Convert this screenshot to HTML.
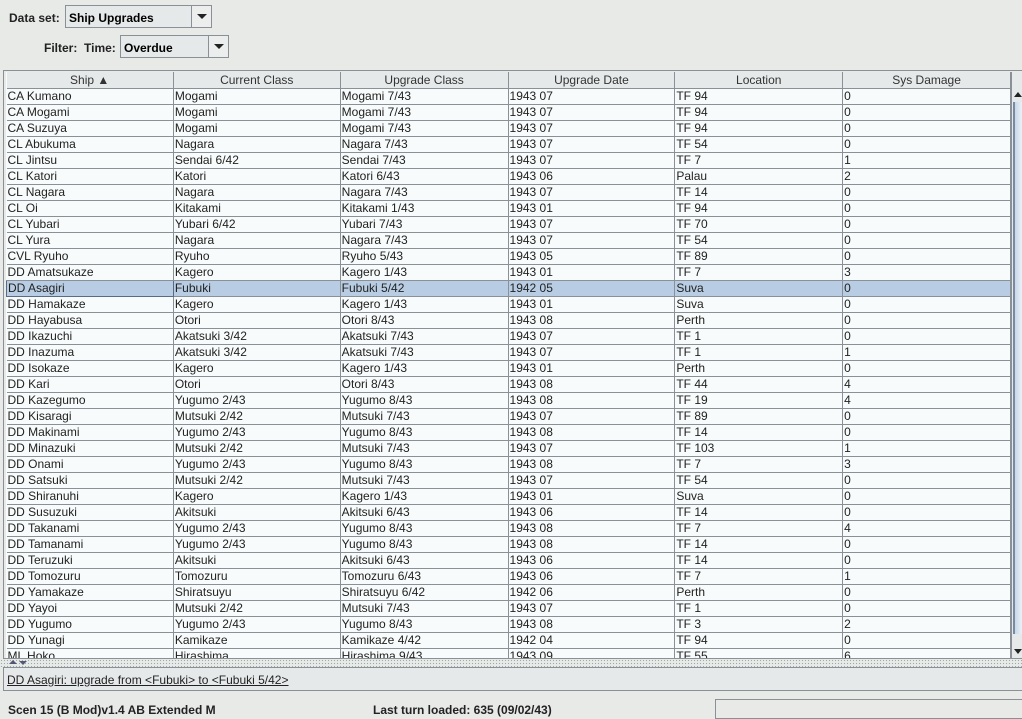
<!DOCTYPE html>
<html><head><meta charset="utf-8"><style>
*{margin:0;padding:0;box-sizing:border-box}
body{width:1022px;height:719px;background:#e8eae8;font-family:"Liberation Sans",sans-serif;position:relative;overflow:hidden;color:#000}
.lbl{position:absolute;font-size:12px;font-weight:bold;color:#222}
.combo{position:absolute;border:1px solid #8a9095;background:#e6e9ea;font-size:12px;font-weight:bold;padding:4px 3px 0;height:23px;line-height:17px}
.combo .btn{position:absolute;right:0;top:0;width:20px;height:21px;border-left:1px solid #8a9095;background:#eceeee}
.combo .btn:after{content:"";position:absolute;left:5px;top:8px;border-left:5px solid transparent;border-right:5px solid transparent;border-top:5px solid #222}
#frame{position:absolute;left:3px;top:70px;width:1019px;height:589px;border:1px solid #8a9095;border-right:none}
#tbl{position:absolute;left:6px;top:72px;width:1005px;height:586px;overflow:hidden;background:#f8fbfb}
table{border-collapse:collapse;table-layout:fixed;font-size:12px}
td,th{border:1px solid #8a9095;height:16px;padding:0 1px;white-space:nowrap;overflow:hidden;line-height:13px}
th{font-weight:normal;background:#e6e9ea;color:#333;text-align:center;border-top:none;line-height:14px;padding-top:1px}
td{color:#222}
tr.sel td{background:#b8cde3}
tr.sel td:first-child{border:1px solid #5a6a80}
td:first-child,th:first-child{border-left:none}
#sb{position:absolute;left:1011px;top:72px;width:11px;height:586px;background:#e6e9ea;border-left:1px solid #8a9095}
#thumb{position:absolute;left:1px;top:30px;width:10px;height:532px;background:linear-gradient(90deg,#c8d8ea,#f0f4f8);border-left:2px solid #7a8aa0}
.up{position:absolute;left:2px;width:0;height:0;border-left:4px solid transparent;border-right:4px solid transparent}
#split{position:absolute;left:0;top:659px;width:1022px;height:8px;background-image:radial-gradient(#9aa 0.6px,transparent 0.8px);background-size:3px 3px;background-color:#e8eae8}
#ta{position:absolute;left:3px;top:667px;width:1019px;height:24px;border:1px solid #8a9095;border-right:none;background:#e6e9ea;font-size:12px;padding:5px 3px 0;line-height:14px;color:#222}
#st{position:absolute;top:703px;font-size:12px;font-weight:bold;color:#222}
#box{position:absolute;left:715px;top:699px;width:307px;height:20px;border:1px solid #8a9095;border-right:none}
</style></head><body>
<div class="lbl" style="left:9px;top:11px">Data set:</div>
<div class="combo" style="left:65px;top:5px;width:147px">Ship Upgrades<div class="btn"></div></div>
<div class="lbl" style="left:44px;top:41px">Filter:&nbsp; Time:</div>
<div class="combo" style="left:120px;top:35px;width:109px">Overdue<div class="btn"></div></div>
<div id="frame"></div>
<div id="tbl"><table>
<colgroup><col style="width:167px"><col style="width:167px"><col style="width:168px"><col style="width:167px"><col style="width:168px"><col style="width:168px"></colgroup>
<tr><th>Ship &#9650;</th><th>Current Class</th><th>Upgrade Class</th><th>Upgrade Date</th><th>Location</th><th>Sys Damage</th></tr>
<tr><td>CA Kumano</td><td>Mogami</td><td>Mogami 7/43</td><td>1943 07</td><td>TF 94</td><td>0</td></tr>
<tr><td>CA Mogami</td><td>Mogami</td><td>Mogami 7/43</td><td>1943 07</td><td>TF 94</td><td>0</td></tr>
<tr><td>CA Suzuya</td><td>Mogami</td><td>Mogami 7/43</td><td>1943 07</td><td>TF 94</td><td>0</td></tr>
<tr><td>CL Abukuma</td><td>Nagara</td><td>Nagara 7/43</td><td>1943 07</td><td>TF 54</td><td>0</td></tr>
<tr><td>CL Jintsu</td><td>Sendai 6/42</td><td>Sendai 7/43</td><td>1943 07</td><td>TF 7</td><td>1</td></tr>
<tr><td>CL Katori</td><td>Katori</td><td>Katori 6/43</td><td>1943 06</td><td>Palau</td><td>2</td></tr>
<tr><td>CL Nagara</td><td>Nagara</td><td>Nagara 7/43</td><td>1943 07</td><td>TF 14</td><td>0</td></tr>
<tr><td>CL Oi</td><td>Kitakami</td><td>Kitakami 1/43</td><td>1943 01</td><td>TF 94</td><td>0</td></tr>
<tr><td>CL Yubari</td><td>Yubari 6/42</td><td>Yubari 7/43</td><td>1943 07</td><td>TF 70</td><td>0</td></tr>
<tr><td>CL Yura</td><td>Nagara</td><td>Nagara 7/43</td><td>1943 07</td><td>TF 54</td><td>0</td></tr>
<tr><td>CVL Ryuho</td><td>Ryuho</td><td>Ryuho 5/43</td><td>1943 05</td><td>TF 89</td><td>0</td></tr>
<tr><td>DD Amatsukaze</td><td>Kagero</td><td>Kagero 1/43</td><td>1943 01</td><td>TF 7</td><td>3</td></tr>
<tr class="sel"><td>DD Asagiri</td><td>Fubuki</td><td>Fubuki 5/42</td><td>1942 05</td><td>Suva</td><td>0</td></tr>
<tr><td>DD Hamakaze</td><td>Kagero</td><td>Kagero 1/43</td><td>1943 01</td><td>Suva</td><td>0</td></tr>
<tr><td>DD Hayabusa</td><td>Otori</td><td>Otori 8/43</td><td>1943 08</td><td>Perth</td><td>0</td></tr>
<tr><td>DD Ikazuchi</td><td>Akatsuki 3/42</td><td>Akatsuki 7/43</td><td>1943 07</td><td>TF 1</td><td>0</td></tr>
<tr><td>DD Inazuma</td><td>Akatsuki 3/42</td><td>Akatsuki 7/43</td><td>1943 07</td><td>TF 1</td><td>1</td></tr>
<tr><td>DD Isokaze</td><td>Kagero</td><td>Kagero 1/43</td><td>1943 01</td><td>Perth</td><td>0</td></tr>
<tr><td>DD Kari</td><td>Otori</td><td>Otori 8/43</td><td>1943 08</td><td>TF 44</td><td>4</td></tr>
<tr><td>DD Kazegumo</td><td>Yugumo 2/43</td><td>Yugumo 8/43</td><td>1943 08</td><td>TF 19</td><td>4</td></tr>
<tr><td>DD Kisaragi</td><td>Mutsuki 2/42</td><td>Mutsuki 7/43</td><td>1943 07</td><td>TF 89</td><td>0</td></tr>
<tr><td>DD Makinami</td><td>Yugumo 2/43</td><td>Yugumo 8/43</td><td>1943 08</td><td>TF 14</td><td>0</td></tr>
<tr><td>DD Minazuki</td><td>Mutsuki 2/42</td><td>Mutsuki 7/43</td><td>1943 07</td><td>TF 103</td><td>1</td></tr>
<tr><td>DD Onami</td><td>Yugumo 2/43</td><td>Yugumo 8/43</td><td>1943 08</td><td>TF 7</td><td>3</td></tr>
<tr><td>DD Satsuki</td><td>Mutsuki 2/42</td><td>Mutsuki 7/43</td><td>1943 07</td><td>TF 54</td><td>0</td></tr>
<tr><td>DD Shiranuhi</td><td>Kagero</td><td>Kagero 1/43</td><td>1943 01</td><td>Suva</td><td>0</td></tr>
<tr><td>DD Susuzuki</td><td>Akitsuki</td><td>Akitsuki 6/43</td><td>1943 06</td><td>TF 14</td><td>0</td></tr>
<tr><td>DD Takanami</td><td>Yugumo 2/43</td><td>Yugumo 8/43</td><td>1943 08</td><td>TF 7</td><td>4</td></tr>
<tr><td>DD Tamanami</td><td>Yugumo 2/43</td><td>Yugumo 8/43</td><td>1943 08</td><td>TF 14</td><td>0</td></tr>
<tr><td>DD Teruzuki</td><td>Akitsuki</td><td>Akitsuki 6/43</td><td>1943 06</td><td>TF 14</td><td>0</td></tr>
<tr><td>DD Tomozuru</td><td>Tomozuru</td><td>Tomozuru 6/43</td><td>1943 06</td><td>TF 7</td><td>1</td></tr>
<tr><td>DD Yamakaze</td><td>Shiratsuyu</td><td>Shiratsuyu 6/42</td><td>1942 06</td><td>Perth</td><td>0</td></tr>
<tr><td>DD Yayoi</td><td>Mutsuki 2/42</td><td>Mutsuki 7/43</td><td>1943 07</td><td>TF 1</td><td>0</td></tr>
<tr><td>DD Yugumo</td><td>Yugumo 2/43</td><td>Yugumo 8/43</td><td>1943 08</td><td>TF 3</td><td>2</td></tr>
<tr><td>DD Yunagi</td><td>Kamikaze</td><td>Kamikaze 4/42</td><td>1942 04</td><td>TF 94</td><td>0</td></tr>
<tr><td>ML Hoko</td><td>Hirashima</td><td>Hirashima 9/43</td><td>1943 09</td><td>TF 55</td><td>6</td></tr>
</table></div>
<div id="sb"><div class="up" style="top:20px;border-bottom:5px solid #222"></div><div id="thumb"></div><div class="up" style="top:577px;border-top:5px solid #222"></div></div>
<div id="split"><div style="position:absolute;left:9px;top:1px;border-left:4px solid transparent;border-right:4px solid transparent;border-bottom:4px solid #557"></div><div style="position:absolute;left:19px;top:2px;border-left:4px solid transparent;border-right:4px solid transparent;border-top:4px solid #557"></div></div>
<div id="ta"><span style="text-decoration:underline">DD Asagiri: upgrade from &lt;Fubuki&gt; to &lt;Fubuki 5/42&gt;</span></div>
<div id="st" style="left:8px">Scen 15 (B Mod)v1.4 AB Extended M</div>
<div style="position:absolute;top:703px;left:373px;font-size:12px;font-weight:bold;color:#222">Last turn loaded: 635 (09/02/43)</div>
<div id="box"></div>
</body></html>
